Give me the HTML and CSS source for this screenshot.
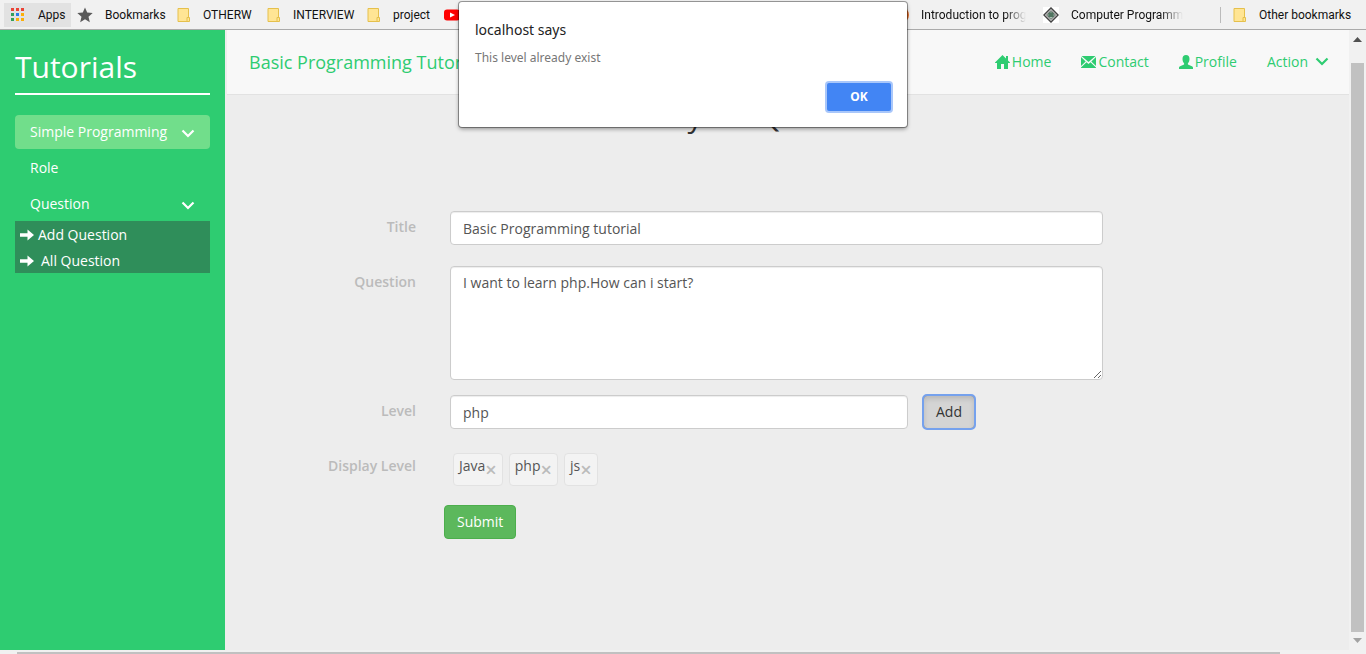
FILE: index.html
```html
<!DOCTYPE html>
<html lang="en">
<head>
<meta charset="utf-8">
<title>Tutorials</title>
<link rel="stylesheet" href="styles.css">
</head>
<body>
<svg class="defs" aria-hidden="true">
  <symbol id="folder" viewBox="0 0 14 16"><path d="M1 1.500h10.500v13H1z" fill="#ffe594" stroke="#e5c04c"/><path d="M10 10.500h2.500v4H10z" fill="#ffe594" stroke="#e5c04c"/></symbol>
  <symbol id="chevron" viewBox="0 0 14 10"><path d="M1.500 1.500 7 7l5.500-5.500" fill="none" stroke="currentColor" stroke-width="2.200"/></symbol>
  <symbol id="arrow" viewBox="0 0 14 12"><path d="M0 4.300h7.500V.5L14 6l-6.500 5.500V7.700H0z" fill="currentColor"/></symbol>
</svg>

<nav class="bookmarks" aria-label="Bookmarks">
  <a class="bm bm-apps" href="#"><svg width="14" height="14" viewBox="0 0 14 14"><path d="M0 0h3v3H0zM5 0h3v3H5zM10 0h3v3h-3z" fill="#ea4335"/><path d="M0 5h3v3H0zM0 10h3v3H0z" fill="#34a05a"/><path d="M5 5h3v3H5z" fill="#2b7de9"/><path d="M10 5h3v3h-3zM5 10h3v3H5zM10 10h3v3h-3z" fill="#fbaf08"/></svg><span>Apps</span></a>
  <a class="bm bm-star" href="#"><svg width="16" height="16" viewBox="0 0 16 16"><path d="m8 .5 2.200 5.100 5.500.5-4.200 3.700 1.300 5.400L8 12.300l-4.800 2.900 1.300-5.400L.3 6.100l5.500-.5z" fill="#5a5a5a"/></svg><span>Bookmarks</span></a>
  <a class="bm bm-short" href="#"><svg width="14" height="16"><use href="#folder"/></svg><span>OTHERW</span></a>
  <a class="bm bm-medium" href="#"><svg width="14" height="16"><use href="#folder"/></svg><span>INTERVIEW</span></a>
  <a class="bm bm-small" href="#"><svg width="14" height="16"><use href="#folder"/></svg><span>project</span></a>
  <a class="bm" href="#" aria-label="YouTube"><svg width="16" height="12" viewBox="0 0 16 12"><rect width="16" height="11" y=".5" rx="3" fill="#f00"/><path d="m6 3.500 5 2.500-5 2.500z" fill="#fff"/></svg></a>
  <div class="bm-right">
    <a class="bm bm-page" href="#"><svg width="16" height="16" viewBox="0 0 16 16"><circle cx="8" cy="8" r="8" fill="#e8702a"/></svg><span class="fade">Introduction to prog</span></a>
    <a class="bm bm-wide" href="#"><svg width="16" height="16" viewBox="0 0 16 16"><path d="M0 0h16v16H0z" fill="#fff"/><path d="m8 1 7 7-7 7-7-7z" fill="#fff" stroke="#444" stroke-width="1.500"/><path d="m8 3.500 4.500 4.500L8 12.500 3.500 8z" fill="#a9c5b4" stroke="#555"/><path d="M5 7h6M5 9h6M7 5v5M9 5v5" stroke="#355a46"/></svg><span class="fade">Computer Programm</span></a>
    <a class="bm bm-other" href="#"><svg width="14" height="16"><use href="#folder"/></svg><span>Other bookmarks</span></a>
  </div>
</nav>

<div class="viewport">
  <aside class="sidebar">
    <h1>Tutorials</h1>
    <ul class="menu">
      <li><a class="active" href="#">Simple Programming<svg width="14" height="10"><use href="#chevron"/></svg></a></li>
      <li><a href="#">Role</a></li>
      <li><a href="#">Question<svg width="14" height="10"><use href="#chevron"/></svg></a>
        <ul class="submenu">
          <li><a href="#"><svg width="14" height="12"><use href="#arrow"/></svg>Add Question</a></li>
          <li><a class="spaced" href="#"><svg width="14" height="12"><use href="#arrow"/></svg>All Question</a></li>
        </ul>
      </li>
    </ul>
  </aside>

  <div class="content">
    <header class="navbar">
      <a class="brand" href="#">Basic Programming Tutorial</a>
      <nav class="links">
        <a href="#"><svg width="15" height="14" viewBox="0 0 15 14"><path d="M7.500 0 11 3.400V1h2v4.400l2 2V8h-2v6H9V9H6v5H2V8H0v-.6z" fill="currentColor"/></svg>Home</a>
        <a href="#"><svg width="15" height="12" viewBox="0 0 15 12"><path d="M.5 0h14l-7 6zM0 1l4.700 4.500L0 10zM15 1v9l-4.700-4.500zM5.500 6.300l2 1.700 2-1.700 5.500 5.200v.5H0v-.5z" fill="currentColor"/></svg>Contact</a>
        <a href="#"><svg width="14" height="14" viewBox="0 0 14 14"><path d="M7 0c2.300 0 3.500 1.500 3.500 4 0 1.900-.7 3.400-1.600 4.300v1.200l4 1.800c.8.400 1.100.9 1.100 1.600V14H0v-1.100c0-.7.3-1.200 1.100-1.600l4-1.800V8.300C4.200 7.400 3.500 5.900 3.500 4c0-2.500 1.200-4 3.500-4z" fill="currentColor"/></svg>Profile</a>
        <a class="action" href="#">Action<svg width="14" height="10"><use href="#chevron"/></svg></a>
      </nav>
    </header>
    <main>
      <h2>your Question</h2>
      <form class="form">
        <label for="title">Title</label>
        <div><input class="control" id="title" type="text" value="Basic Programming tutorial"></div>
        <label for="question">Question</label>
        <div><textarea class="control" id="question" rows="5">I want to learn php.How can i start?</textarea></div>
        <label class="tight" for="level">Level</label>
        <div class="level tight"><input class="control" id="level" type="text" value="php"><button class="add" type="button">Add</button></div>
        <span class="label" id="tags-label">Display Level</span>
        <div class="tags" role="group" aria-labelledby="tags-label">
          <span class="tag">Java<button type="button" aria-label="Remove Java">×</button></span>
          <span class="tag">php<button type="button" aria-label="Remove php">×</button></span>
          <span class="tag">js<button type="button" aria-label="Remove js">×</button></span>
        </div>
        <button class="submit" type="submit">Submit</button>
      </form>
    </main>
  </div>

  <div class="vscroll" aria-hidden="true">
    <svg width="9" height="5" viewBox="0 0 9 5"><path d="M0 5 4.500 0 9 5z" fill="#505050"/></svg>
    <div class="vthumb"></div>
    <svg width="9" height="5" viewBox="0 0 9 5"><path d="m0 0 4.500 5L9 0z" fill="#a3a3a3"/></svg>
  </div>
</div>
<div class="hscroll" aria-hidden="true"><div class="hthumb"></div></div>

<div class="dialog" role="alertdialog" aria-labelledby="dialog-title" aria-describedby="dialog-text">
  <p class="dialog-title" id="dialog-title">localhost says</p>
  <p class="dialog-text" id="dialog-text">This level already exist</p>
  <button class="ok" type="button">OK</button>
</div>
</body>
</html>
```
FILE: styles.css
```css
* { box-sizing: border-box; }

body {
  margin: 0;
  min-height: 100vh;
  display: flex;
  flex-direction: column;
  background: #ededed;
  color: #333;
  font: 14px/20px "Open Sans", sans-serif;
}

a { color: inherit; text-decoration: none; }
button, input, textarea { font: inherit; color: inherit; }
ul { list-style: none; margin: 0; padding: 0; }
.defs { position: absolute; width: 0; height: 0; }
svg { flex: none; }

/* Bookmarks bar */
.bookmarks {
  display: flex;
  align-items: center;
  height: 30px;
  padding-left: 4px;
  background: #f1f1f1;
  border-bottom: 1px solid #aaa;
  color: #111;
  font-family: Roboto, sans-serif;
  font-size: 12px;
  line-height: 24px;
  white-space: nowrap;
}
.bm { display: flex; align-items: center; gap: 12px; flex: none; }
.bm-apps { width: 67px; margin-right: 6px; padding-left: 7px; gap: 13px; background: #e2e2e2; }
.bm-star { width: 100px; }
.bm-short { width: 90px; }
.bm-medium { width: 100px; }
.bm-small { width: 77px; }
.bm-right { display: flex; align-items: center; margin-left: auto; }
.bm-page { width: 150px; }
.bm-wide { width: 177px; }
.bm-other { width: 146px; height: 16px; padding-left: 12px; border-left: 1px solid #bbb; }
.fade {
  -webkit-mask-image: linear-gradient(to right, #000 80%, transparent);
  mask-image: linear-gradient(to right, #000 80%, transparent);
}

/* Page frame */
.viewport { flex: 1; display: flex; }

.sidebar { flex: none; width: 225px; padding: 20px 15px; background: #2ecc71; color: #fff; }
.sidebar h1 {
  margin: 0 0 20px;
  padding-bottom: 10px;
  border-bottom: 2px solid #fff;
  font-size: 30px;
  line-height: 33px;
  font-weight: 400;
}
.menu > li { margin-bottom: 2px; }
.menu > li > a {
  display: flex;
  align-items: center;
  justify-content: space-between;
  padding: 7px 15px;
  border-radius: 4px;
}
.menu > li > a svg { margin-top: 4px; }
.menu .active { background: #71de8b; }
.submenu { background: #2f8e5a; }
.submenu a { display: flex; align-items: center; gap: 4px; padding: 4px 5px 2px; }
.submenu .spaced { gap: 7px; }

.content { flex: 1; min-width: 0; }
.navbar {
  display: flex;
  align-items: center;
  justify-content: space-between;
  height: 65px;
  margin-left: 2px;
  padding: 0 20px 0 22px;
  background: #f8f8f8;
  border-bottom: 1px solid #e2e2e2;
  color: #2ecc71;
}
.brand { font-size: 18px; }
.links { display: flex; gap: 30px; }
.links a { display: flex; align-items: center; gap: 2px; }
.links .action { gap: 7px; }

/* Question form */
main h2 {
  margin: 0 0 76px;
  padding-top: 2px;
  font-size: 30px;
  line-height: 38px;
  font-weight: 400;
  text-align: center;
}
.form {
  display: grid;
  grid-template-columns: minmax(100px, 191px) 1fr;
  column-gap: 34px;
  row-gap: 21px;
  align-items: start;
  padding-right: 246px;
}
.form > label, .label {
  padding-top: 6px;
  color: #bbb;
  font-weight: 600;
  text-align: right;
}
.tight { margin-top: -6px; }
.control {
  display: block;
  width: 100%;
  height: 34px;
  padding: 6px 12px;
  background: #fff;
  border: 1px solid #ccc;
  border-radius: 4px;
  box-shadow: inset 0 1px 1px rgba(0, 0, 0, 0.075);
  color: #555;
}
textarea.control { height: 114px; }
.level { display: grid; grid-template-columns: 1fr 52px; gap: 15px; padding-right: 128px; }
.add {
  height: 34px;
  padding: 0;
  background: #d4d4d4;
  border: 1px solid #8c8c8c;
  border-radius: 4px;
  box-shadow: inset 0 3px 5px rgba(0, 0, 0, 0.125);
  outline: 2px solid #75a1ed;
  outline-offset: -1px;
}
.tags { display: flex; gap: 6px; padding: 3px; }
.tag {
  display: flex;
  height: 33px;
  padding: 2px 5px;
  background: #f3f3f3;
  border: 1px solid #e2e2e2;
  border-radius: 4px;
  color: #555;
}
.tag button {
  padding: 0;
  background: none;
  border: 0;
  color: #bbb;
  font-size: 20px;
  line-height: 20px;
  font-weight: 600;
}
.submit {
  grid-column: 2;
  justify-self: start;
  height: 34px;
  margin: -5px 0 0 -6px;
  padding: 0 12px;
  background: #5cb85c;
  border: 1px solid #4cae4c;
  border-radius: 4px;
  color: #fff;
}

/* Scrollbars */
.vscroll {
  flex: none;
  width: 17px;
  display: flex;
  flex-direction: column;
  align-items: center;
  gap: 6px;
  padding: 7px 0;
  background: #f1f1f1;
}
.vthumb { flex: 1; width: 13px; margin-top: 15px; background: #c1c1c1; }
.hscroll { height: 4px; padding: 2px 86px 0 17px; background: #f1f1f1; }
.hthumb { height: 2px; background: #c1c1c1; }

/* Alert dialog */
.dialog {
  position: absolute;
  top: 2px;
  left: 50%;
  width: 448px;
  transform: translateX(-50%);
  display: flex;
  flex-direction: column;
  padding: 18px 16px 16px;
  background: #fff;
  border-radius: 3px;
  box-shadow: 0 0 0 1px rgba(0, 0, 0, 0.35), 0 2px 4px rgba(0, 0, 0, 0.4);
  font-family: "Noto Sans", sans-serif;
}
.dialog p { margin: 0; }
.dialog-title { color: #222; font-size: 14px; }
.dialog .dialog-text { margin: 8px 0 15px; color: #777; font-size: 12px; }
.ok {
  align-self: flex-end;
  width: 64px;
  height: 28px;
  padding: 0;
  background: #4285f4;
  border: 0;
  border-radius: 2px;
  box-shadow: 0 0 0 2px #a9c7fa;
  color: #fff;
  font-size: 12px;
  font-weight: 700;
}
```
